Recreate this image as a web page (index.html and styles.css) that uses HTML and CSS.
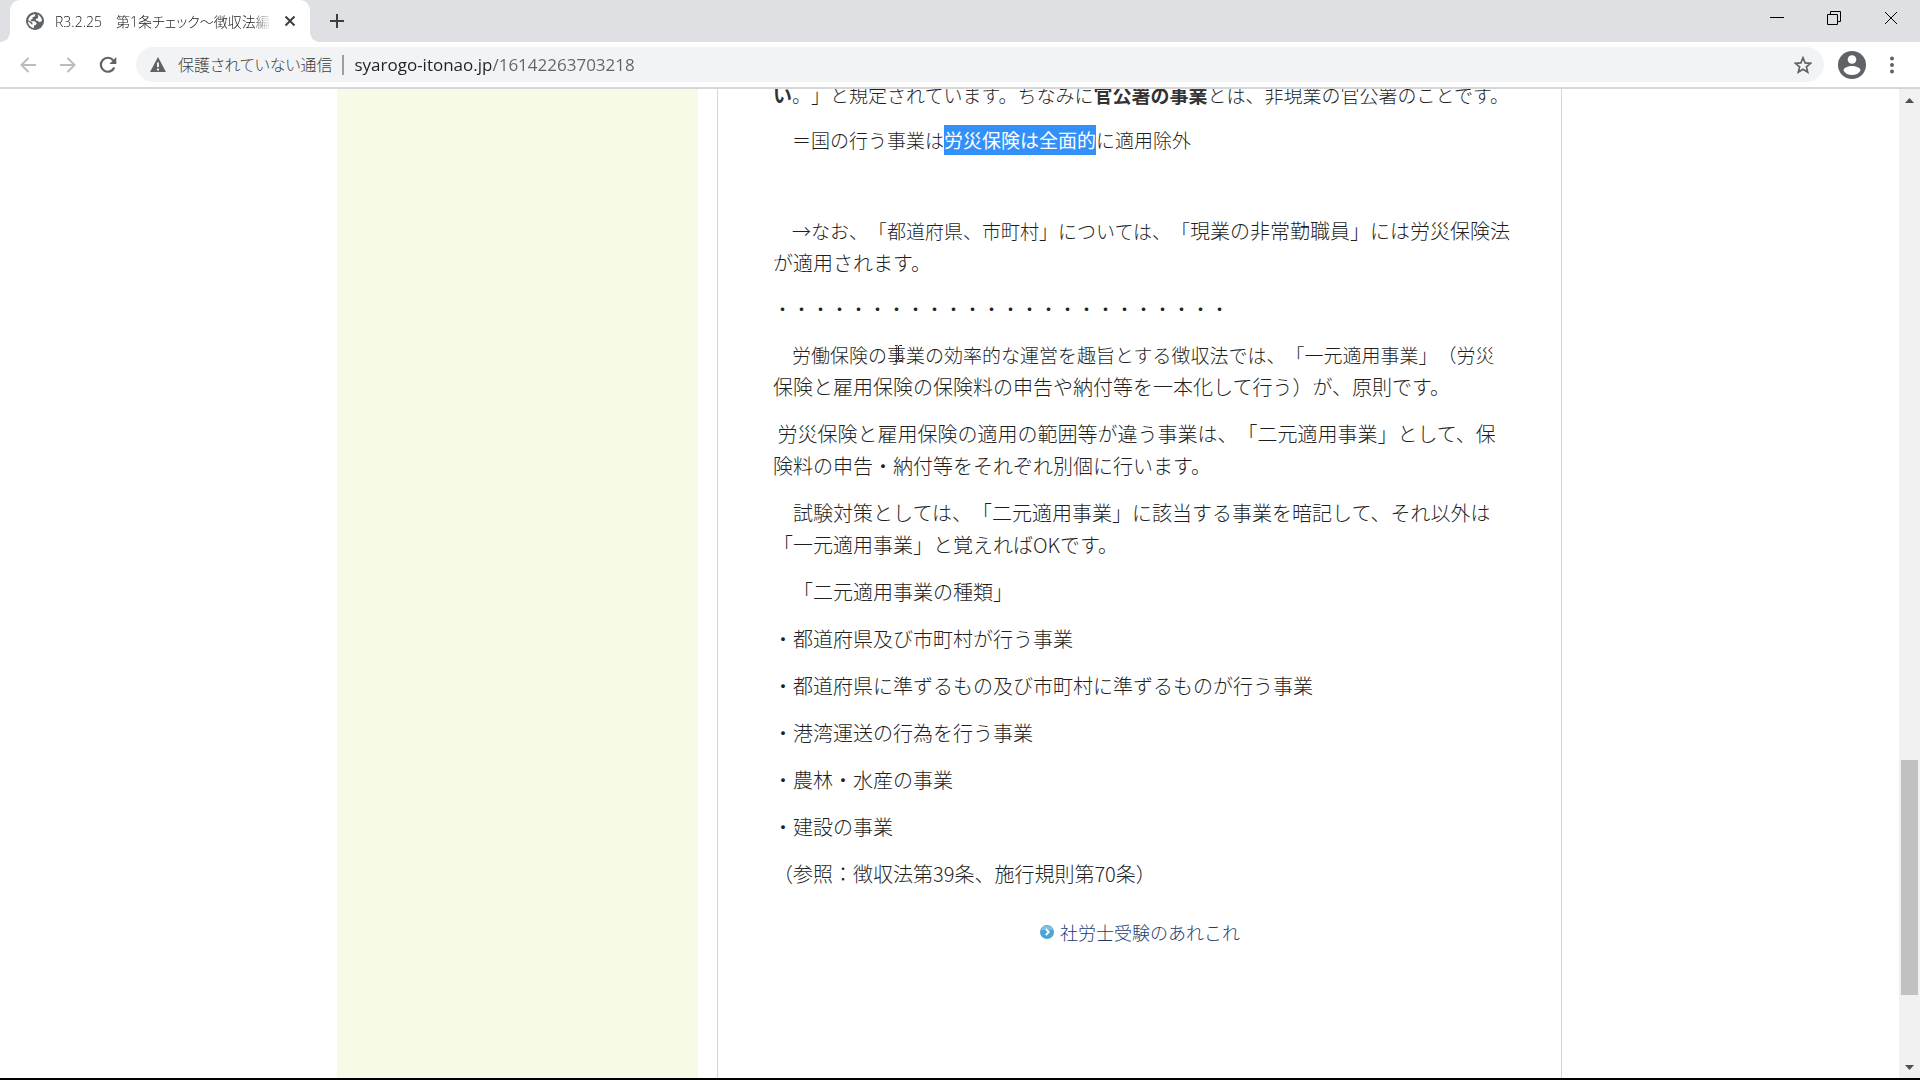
FILE: index.html
```html
<!DOCTYPE html>
<html lang="ja">

<head>
	<meta charset="UTF-8">
	<meta name="viewport" content="width=device-width, initial-scale=1.0">
	<title>R3.2.25　第1条チェック～徴収法編</title>
	<link rel="stylesheet" href="styles.css">
</head>

<body>

	<header class="tab-strip">
		<div class="tab">
			<svg class="tab-icon" viewBox="0 0 18 18" aria-hidden="true">
				<circle cx="9" cy="9" r="9" fill="#5f6368"/>
				<path d="M9.5 2.2 8.6 4.6 6.5 5.2 6.6 7 4.6 7.8 5 9.2 8.6 9.3 10.6 11 10.2 12.6 8.2 13.4 7.8 16C4.500 15.600 2 12.700 2 9.300L4.300 11 5.800 12.600 6.800 12.200 6 10.200 2.200 8.200C2.700 4.800 5.500 2.100 9.500 2.200z" fill="#fff"/>
				<path d="M11.500 2.600C14 3.600 15.900 6 15.900 9L13.400 10.300 12 9 10 8.400 9.600 7 11.600 6.400 12.400 4.800z" fill="#fff"/>
			</svg>
			<span class="tab-title">R3.2.25　第1条チェック～徴収法編</span>
			<button class="tab-close" aria-label="タブを閉じる">
				<svg width="12" height="12" viewBox="0 0 12 12"><path d="M1.500 1.500l9 9M10.500 1.500l-9 9" stroke="#3c4043" stroke-width="2"/></svg>
			</button>
		</div>
		<button class="new-tab" aria-label="新しいタブ">
			<svg width="16" height="16" viewBox="0 0 16 16"><path d="M8 1v14M1 8h14" stroke="#3c4043" stroke-width="2"/></svg>
		</button>
		<div class="window-buttons">
			<button aria-label="最小化">
				<svg width="14" height="14" viewBox="0 0 14 14"><path d="M0 6.500h14" stroke="#000"/></svg>
			</button>
			<button aria-label="元に戻す">
				<svg width="14" height="14" viewBox="0 0 14 14" fill="none" stroke="#000"><path d="M.5 3.500h10v10H.5zM3.500 3.500V.5h10v10h-3"/></svg>
			</button>
			<button aria-label="閉じる">
				<svg width="14" height="14" viewBox="0 0 14 14"><path d="M1 1l12 12M13 1L1 13" stroke="#000"/></svg>
			</button>
		</div>
	</header>

	<nav class="toolbar">
		<button class="nav-button" aria-label="戻る">
			<svg width="16" height="16" viewBox="0 0 16 16" fill="none" stroke="#babcbe" stroke-width="2"><path d="M16 8H2M8.500 1L1.500 8l7 7"/></svg>
		</button>
		<button class="nav-button" aria-label="進む">
			<svg width="16" height="16" viewBox="0 0 16 16" fill="none" stroke="#babcbe" stroke-width="2"><path d="M0 8h14M7.500 1l7 7-7 7"/></svg>
		</button>
		<button class="nav-button" aria-label="再読み込み">
			<svg width="18" height="18" viewBox="0 0 18 18"><path d="M15.300 11.500A7 7 0 1 1 14.200 4.200" fill="none" stroke="#5f6368" stroke-width="2.200"/><path d="M17.300 1v7h-7z" fill="#5f6368"/></svg>
		</button>
		<div class="address-bar">
			<svg width="16" height="15" viewBox="0 0 16 15" aria-hidden="true"><path d="M8 0l8 15H0z" fill="#5f6368"/><path d="M8 5.500v4.500M8 11.500v2" stroke="#f1f3f4" stroke-width="2"/></svg>
			<label class="security" for="url">保護されていない通信</label>
			<input class="url" id="url" type="text" value="syarogo-itonao.jp/16142263703218">
			<button class="bookmark" aria-label="ブックマーク">
				<svg width="18" height="18" viewBox="0 0 18 18"><path d="M9 1.800l2.100 5.100 5.500.4-4.200 3.600 1.300 5.300L9 13.300l-4.700 2.900 1.300-5.300L1.400 7.300l5.500-.4z" fill="none" stroke="#5f6368" stroke-width="1.700"/></svg>
			</button>
		</div>
		<button class="profile" aria-label="プロフィール">
			<svg width="28" height="28" viewBox="0 0 28 28"><circle cx="14" cy="14" r="14" fill="#5f6368"/><circle cx="14" cy="8.500" r="4.300" fill="#fff"/><path d="M5.500 19.500c0-2.800 5-4.500 8.500-4.500s8.500 1.700 8.500 4.500C20.800 22.600 17.500 24 14 24s-6.800-1.400-8.500-4.500z" fill="#fff"/></svg>
		</button>
		<button class="menu" aria-label="メニュー">
			<svg width="4" height="18" viewBox="0 0 4 18" fill="#5f6368"><circle cx="2" cy="2.500" r="2"/><circle cx="2" cy="9" r="2"/><circle cx="2" cy="15.500" r="2"/></svg>
		</button>
	</nav>

	<div class="viewport">
		<div class="page">
			<div class="wrapper">
				<aside class="sidebar"></aside>
				<main class="article">
					<p class="small"><b>い</b>。」と規定されています。ちなみに<b>官公署の事業</b>とは、非現業の官公署のことです。</p>
					<p class="small">　＝国の行う事業は<span class="selected">労災保険は全面的</span>に適用除外</p>
					<p class="small">&nbsp;</p>
					<p><span class="small">　→なお、「都道府県、市町村」については、「</span>現業の非常勤職員」には労災保険法が適用されます。</p>
					<p class="small">・・・・・・・・・・・・・・・・・・・・・・・・</p>
					<p><span class="small">　労働保険の事業の効率的な運営を趣旨とする徴収法では、「一元適用事業」（労災</span>保険と雇用保険の保険料の申告や納付等を一本化して行う）が、原則です。</p>
					<p>&nbsp;労災保険と雇用保険の適用の範囲等が違う事業は、「二元適用事業」として、保険料の申告・納付等をそれぞれ別個に行います。</p>
					<p>　試験対策としては、「二元適用事業」に該当する事業を暗記して、それ以外は「一元適用事業」と覚えればOKです。</p>
					<p>　「二元適用事業の種類」</p>
					<p>・都道府県及び市町村が行う事業</p>
					<p>・都道府県に準ずるもの及び市町村に準ずるものが行う事業</p>
					<p>・港湾運送の行為を行う事業</p>
					<p>・農林・水産の事業</p>
					<p>・建設の事業</p>
					<p>（参照：徴収法第39条、施行規則第70条）</p>
					<div class="category">
						<svg width="14" height="14" viewBox="0 0 14 14" aria-hidden="true"><circle cx="7" cy="7" r="7" fill="#4fa3d1"/><path d="M1 5a6.300 6.300 0 0 1 12 0z" fill="#7fc0e2"/><path d="M5.800 4l3 3-3 3" fill="none" stroke="#fff" stroke-width="1.800"/></svg>
						<a href="#">社労士受験のあれこれ</a>
					</div>
					<svg class="cursor" width="9" height="18" viewBox="0 0 9 18" aria-hidden="true"><path d="M1 1.500h2.500l1 1 1-1H8M4.500 2v14M1 16.500h2.500l1-1 1 1H8" fill="none" stroke="#222"/></svg>
				</main>
			</div>
		</div>
		<div class="scrollbar">
			<svg viewBox="0 0 21 21"><path d="M6 14l4.500-5 4.500 5z" fill="#505050"/></svg>
			<div class="thumb"></div>
			<svg class="down" viewBox="0 0 21 21"><path d="M6 8l4.500 5L15 8z" fill="#505050"/></svg>
		</div>
	</div>

</body>

</html>
```
FILE: styles.css
```css
* {
	box-sizing: border-box;
}

body {
	margin: 0;
	height: 100vh;
	display: flex;
	flex-direction: column;
	overflow: hidden;
	border-bottom: 2px solid #000;
	background-color: #fff;
	color: #1f1f1f;
	font-family: "Noto Sans CJK JP", sans-serif;
	text-spacing-trim: space-all;
}

button {
	display: flex;
	align-items: center;
	justify-content: center;
	padding: 0;
	border: 0;
	background: none;
}

/* Tabs */
.tab-strip {
	display: flex;
	align-items: stretch;
	height: 42px;
	padding-left: 10px;
	background-color: #dee0e4;
}

.tab {
	position: relative;
	display: flex;
	align-items: center;
	width: 300px;
	padding: 0 14px 0 16px;
	border-radius: 10px 10px 0 0;
	background-color: #fff;
}

/* Curved feet of the active tab */
.tab::before,
.tab::after {
	content: "";
	position: absolute;
	bottom: 0;
	width: 10px;
	height: 10px;
}

.tab::before {
	right: 100%;
	background: radial-gradient(circle at 0 0, #dee0e4 10px, #fff 10px);
}

.tab::after {
	left: 100%;
	background: radial-gradient(circle at 100% 0, #dee0e4 10px, #fff 10px);
}

.tab-icon {
	flex: none;
	width: 18px;
	height: 18px;
}

.tab-title {
	flex: 1;
	margin-left: 11px;
	overflow: hidden;
	white-space: nowrap;
	font-family: "Open Sans", "Noto Sans CJK JP", sans-serif;
	font-size: 14px;
	font-weight: 300;
	font-feature-settings: "palt";
	color: #202124;
	mask-image: linear-gradient(to left, transparent, #000 20px);
}

.tab-close {
	margin-left: 12px;
}

.new-tab {
	width: 54px;
}

.window-buttons {
	display: flex;
	margin-left: auto;
	padding-right: 1px;
}

.window-buttons button {
	width: 57px;
	padding-bottom: 6px;
}

/* Address bar */
.toolbar {
	display: flex;
	align-items: center;
	height: 47px;
	padding: 0 16px 0 8px;
	border-bottom: 2px solid #d5d6d8;
}

.nav-button {
	width: 40px;
	height: 36px;
}

.address-bar {
	flex: 1;
	display: flex;
	align-items: center;
	height: 35px;
	margin-left: 8px;
	padding: 0 12px 0 14px;
	border-radius: 18px;
	background-color: #f1f3f4;
	font-family: "Open Sans", "Noto Sans CJK JP", sans-serif;
	font-size: 17px;
}

.security {
	margin-left: 12px;
	padding-right: 10px;
	border-right: 2px solid #9aa0a6;
	line-height: 20px;
	font-size: 16px;
	font-weight: 300;
	font-feature-settings: "palt";
	color: #3c4043;
}

.url {
	flex: 1;
	margin-left: 10px;
	padding: 0;
	border: 0;
	outline: 0;
	font: inherit;
	color: transparent;
	/* host name dark, path grey */
	background: linear-gradient(to right, #202124 137px, #5f6368 137px);
	background-clip: text;
}

.profile {
	margin-left: 14px;
}

.menu {
	width: 24px;
	margin-left: 14px;
}

/* Page */
.viewport {
	flex: 1;
	display: flex;
	min-height: 0;
}

.page {
	flex: 1;
	overflow: hidden;
}

.wrapper {
	display: flex;
	gap: 19px;
	max-width: 1225px;
	height: 100%;
	margin: 0 auto;
}

.sidebar {
	flex: 0 0 361px;
	background-color: #f6fae6;
}

.article {
	position: relative;
	flex: 1;
	padding: 0 48px 0 55px;
	border: solid #d5d5d5;
	border-width: 0 1px;
	font-size: 20px;
	font-weight: 300;
	line-height: 32px;
}

.article p {
	margin: 0 0 15px;
}

.article p:first-child {
	margin-top: -9px;
}

.article b {
	font-weight: 700;
	color: #333;
}

.small {
	font-size: 19px;
}

p.small {
	line-height: 30px;
}

.selected {
	display: inline-block;
	background-color: #3390f8;
	color: #fff;
	font-weight: 400;
}

.category {
	display: flex;
	align-items: center;
	justify-content: center;
	gap: 6px;
	margin: 26px 6px 0 0;
	font-size: 18px;
}

.category a {
	color: #1c3a70;
	text-decoration: none;
}

.cursor {
	position: absolute;
	top: 255px;
	left: 176px;
}

/* Scrollbar */
.scrollbar {
	display: grid;
	grid-template-rows: 21px 651fr 235fr 62fr 21px;
	width: 21px;
	background-color: #f1f1f1;
}

.thumb {
	grid-row: 3;
	margin: 0 2px;
	background-color: #c1c1c1;
}

.down {
	grid-row: 5;
}
```
